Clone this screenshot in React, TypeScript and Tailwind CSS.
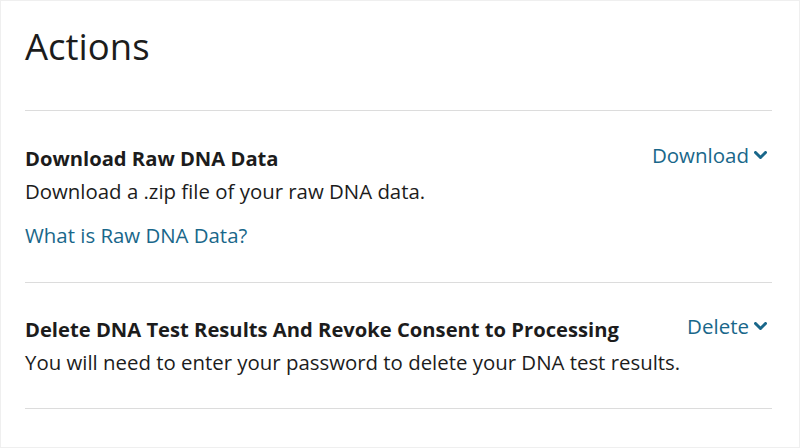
import React from 'react';

const Chevron = () => (
  <svg width="13" height="9" viewBox="0 0 13 9" className="ml-[5px] mr-[5px] mt-[1px]" aria-hidden="true">
    <polyline points="1.5,1.5 6.5,6.5 11.5,1.5" fill="none" stroke="currentColor" strokeWidth="3" strokeLinecap="round" strokeLinejoin="round" />
  </svg>
);

const ActionRow = ({
  title,
  description,
  action,
  link,
  spacing,
}: {
  title: string;
  description: string;
  action: string;
  link?: string;
  spacing: string;
}) => (
  <div className={`flex justify-between items-start border-b border-[#dcdcdc] ${spacing}`}>
    <div>
      <h3 className="text-[20.2px] leading-[33px] font-bold text-[#1c1c1c]">{title}</h3>
      <p className="text-[20.4px] leading-[33px] text-[#1c1c1c]">{description}</p>
      {link && (
        <a href="#" className="block mt-[11px] text-[20.4px] leading-[33px] text-[#19678a]">
          {link}
        </a>
      )}
    </div>
    <button className="flex items-center text-[20.5px] leading-[26px] text-[#19678a]">
      {action}
      <Chevron />
    </button>
  </div>
);

const App = () => {
  return (
    <div className="min-h-[448px] bg-white border border-[#efefef] pl-[24px] pr-[27px] pt-[23px]" style={{ fontFamily: '"Open Sans", sans-serif' }}>
      <h2 className="text-[36.5px] leading-[44px] text-[#1c1c1c] mb-[42px]">Actions</h2>
      <div className="border-t border-[#dcdcdc]">
        <ActionRow
          title="Download Raw DNA Data"
          description="Download a .zip file of your raw DNA data."
          action="Download"
          link="What is Raw DNA Data?"
          spacing="pt-[31px] pb-[30px]"
        />
        <ActionRow
          title="Delete DNA Test Results And Revoke Consent to Processing"
          description="You will need to enter your password to delete your DNA test results."
          action="Delete"
          spacing="pt-[30px] pb-[29px]"
        />
      </div>
    </div>
  );
};

export default App;
